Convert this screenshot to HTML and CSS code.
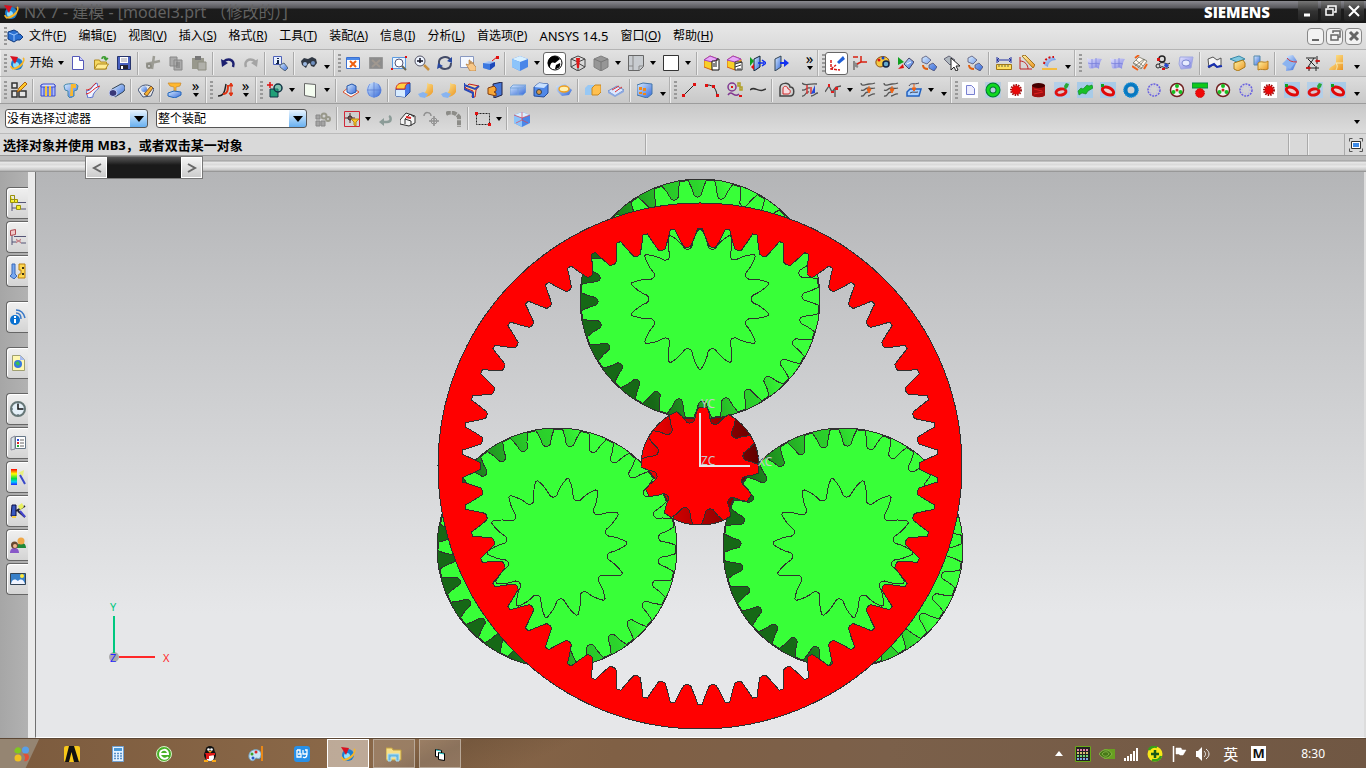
FILE: index.html
```html
<!DOCTYPE html>
<html lang="zh-CN">
<head>
<meta charset="utf-8">
<title>NX 7 - 建模</title>
<link rel="stylesheet" href="styles.css">
</head>
<body>
<svg class="defs" aria-hidden="true">
<defs>
<linearGradient id="gb" x1="0" y1="0" x2="1" y2="1"><stop offset="0" stop-color="#d8ecff"/><stop offset="1" stop-color="#3468d8"/></linearGradient>
<linearGradient id="gy" x1="0" y1="0" x2="1" y2="1"><stop offset="0" stop-color="#fff6a8"/><stop offset="1" stop-color="#ec9420"/></linearGradient>
<linearGradient id="gv" x1="0" y1="0" x2="1" y2="1"><stop offset="0" stop-color="#e4e4ff"/><stop offset="1" stop-color="#7c80e0"/></linearGradient>
<linearGradient id="gr" x1="0" y1="0" x2="0" y2="1"><stop offset="0" stop-color="#f00"/><stop offset=".3" stop-color="#ff0"/><stop offset=".6" stop-color="#0d4"/><stop offset=".8" stop-color="#0cf"/><stop offset="1" stop-color="#22f"/></linearGradient>
</defs>
<symbol id="nx" viewBox="0 0 16 16"><circle cx="8" cy="9" r="6" fill="#1c7fd0"/><circle cx="7" cy="10" r="3" fill="#8fe0ff"/><path d="M14 3c3 2-2 9-11 11M2 11c0 4 7 4 12-3" fill="none" stroke="#f5b52a" stroke-width="1.600"/><path d="M1 1l8 1-3 7z" fill="#d81020"/></symbol>
<symbol id="part" viewBox="0 0 16 16"><path d="M1 4l6-2 4 2v2h2l3 3-3 3h-3l-3 2-6-3z" fill="#2a6fd0" stroke="#123c80"/><path d="M2 5l5 2v6M7 7l4-2" fill="none" stroke="#9cc8ff"/></symbol>
<symbol id="new" viewBox="0 0 16 16"><path d="M2.500 1.500h7l4 4v9h-11z" fill="#fff" stroke="#5458b8"/><path d="M9.500 1.500v4h4" fill="#c8ccff" stroke="#5458b8"/></symbol>
<symbol id="open" viewBox="0 0 16 16"><path d="M1.500 14V5h5l1 2h6v7z" fill="#f6d860" stroke="#b08a20"/><path d="M1.500 14l3-5h11l-3 5z" fill="#ffeb90" stroke="#b08a20"/><path d="M9 4c0-3 4-3 4 0M11 3l2 2 2-2" fill="none" stroke="#3c9c30" stroke-width="1.500"/></symbol>
<symbol id="save" viewBox="0 0 16 16"><path d="M1.500 1.500h13v13h-13z" fill="#4860c0" stroke="#26346c"/><path d="M4 2h8v6H4z" fill="#fff"/><path d="M5 4h6M5 6h6" stroke="#99a"/><path d="M4 10h8v4H4z" fill="#223"/><path d="M5 11h2v3H5z" fill="#fff"/></symbol>
<symbol id="cut" viewBox="0 0 16 16"><path d="M1 9l14-3M9 1L7 14" stroke="#9c9c94" stroke-width="2.500"/><circle cx="4" cy="11" r="2" fill="none" stroke="#8c8c84" stroke-width="2"/></symbol>
<symbol id="copy" viewBox="0 0 16 16"><path d="M2 2h7v9H2zM6 5h8v10H6z" fill="#aaa" stroke="#888"/><path d="M8 8h4M8 10h4M8 12h4" stroke="#777"/></symbol>
<symbol id="paste" viewBox="0 0 16 16"><path d="M1 3h12v11H1z" fill="#98988c"/><path d="M4 1h6v4H4z" fill="#777"/><path d="M7 7h8v8H7z" fill="#b0b0aa" stroke="#8c8c80"/></symbol>
<symbol id="undo" viewBox="0 0 16 16"><path d="M3 8c3-6 13-4 10 4" fill="none" stroke="#1c2070" stroke-width="2.500"/><path d="M1 4l1 8 6-4z" fill="#1c2070"/></symbol>
<symbol id="redo" viewBox="0 0 16 16"><path d="M13 8C10 2 0 4 3 12" fill="none" stroke="#a4a4a4" stroke-width="2.500"/><path d="M15 4l-1 8-6-4z" fill="#a4a4a4"/></symbol>
<symbol id="info" viewBox="0 0 16 16"><path d="M1.500 1.500h8v8h-8z" fill="#e8f0ff" stroke="#4c60b8"/><path d="M5 3h2v1H5zM5 5h2v4H4V8h1z" fill="#124"/><path d="M8 10l4-2 4 5-3 3-5-4z" fill="url(#gb)" stroke="#567"/></symbol>
<symbol id="find" viewBox="0 0 16 16"><path d="M0 6l3-3 4 1 4-2 4 2 1 4-3 4-3-1-1-3-2 1-2 4-4-3z" fill="#303844"/><circle cx="4" cy="9" r="2" fill="#9cb8e0"/><circle cx="12" cy="8" r="2" fill="#7090c0"/></symbol>
<symbol id="fit" viewBox="0 0 16 16"><path d="M1.500 2.500h13v11h-13z" fill="#fff" stroke="#3c70d0"/><path d="M2 3h12v2H2z" fill="#4c8ae8"/><path d="M5 6l6 6M11 6l-6 6" stroke="#f06010" stroke-width="2"/></symbol>
<symbol id="fitg" viewBox="0 0 16 16"><path d="M1.500 2.500h13v11h-13z" fill="#8c8c8c" stroke="#999"/><path d="M4 5l8 7M12 5l-8 7" stroke="#a09890" stroke-width="2"/></symbol>
<symbol id="zoomfit" viewBox="0 0 16 16"><path d="M1.500 2.500h13v11h-13z" fill="#e8f4ff" stroke="#5c9ae0"/><circle cx="8" cy="8" r="4" fill="#fff" stroke="#557"/><path d="M11 11l4 4" stroke="#665" stroke-width="2"/><path d="M0 13h2v2H0zM14 1h2v2h-2z" fill="#e01010"/></symbol>
<symbol id="zoom" viewBox="0 0 16 16"><circle cx="6" cy="6" r="5" fill="#eef4ff" stroke="#556"/><path d="M3 6h6M6 3v5" stroke="#112" stroke-width="1.500"/><path d="M10 10l5 5" stroke="#c89040" stroke-width="2.500"/></symbol>
<symbol id="rot" viewBox="0 0 16 16"><path d="M2 9C1 1 11 0 14 6M14 8c0 7-9 8-12 2" fill="none" stroke="#444c68" stroke-width="2"/><path d="M15 2v6l-5-2zM0 14l1-6 5 3z" fill="#2848a0"/></symbol>
<symbol id="pan" viewBox="0 0 16 16"><path d="M.500 1.500h13v11H.500z" fill="#f4f8ff" stroke="#8898c0"/><path d="M6 9l3 1V5h1v4l1-3 1 3 1-2 1 3 2 2v4h-6z" fill="#f8c888" stroke="#a86c28" stroke-width=".6"/></symbol>
<symbol id="persp" viewBox="0 0 16 16"><path d="M0 8l5-2 7 1v4l-5 4-7-2z" fill="url(#gb)"/><path d="M0 8l7 1v6l-7-2z" fill="#3c78e0"/><path d="M12 7l-5 2v6l5-4z" fill="#1c48b8"/><path d="M9 6l5-4" stroke="#d11"/><path d="M13 1h3v3h-3z" fill="#e01010"/></symbol>
<symbol id="cube" viewBox="0 0 16 16"><path d="M0 4l8-3 8 3v8l-8 4-8-4z" fill="#4a86e8"/><path d="M0 4l8-3 8 3-8 3z" fill="#d8f0ff"/><path d="M0 4l8 3v9l-8-4z" fill="#8cc4fa"/></symbol>
<symbol id="ball" viewBox="0 0 16 16"><circle cx="8" cy="8" r="7" fill="#fff" stroke="#000"/><path d="M8 1a7 7 0 0 0-5 12c0-6 3-6 5-5l5-4a7 7 0 0 0-5-3zM9 10l4-2c1 4-2 6-5 6z"/></symbol>
<symbol id="wire" viewBox="0 0 16 16"><path d="M1 4l7-3 7 3v8l-7 4-7-4zM1 4l7 3 7-3M8 7v9M1 12l7-4 7 4" fill="none" stroke="#444"/><path d="M6 3h4l-1 10H7z" fill="#e01818"/></symbol>
<symbol id="wireg" viewBox="0 0 16 16"><path d="M1 4l7-3 7 3v8l-7 4-7-4z" fill="#969696" stroke="#808080"/><path d="M1 4l7 3 7-3M8 7v9" fill="none" stroke="#777"/></symbol>
<symbol id="note" viewBox="0 0 16 16"><path d="M.500.500h15v11l-4 4H.500z" fill="#c8ccd0" stroke="#666"/><path d="M1 11h4v4M5 1v10M11 15v-4h4" fill="none" stroke="#888"/></symbol>
<symbol id="white" viewBox="0 0 16 16"><path d="M.500.500h15v15H.500z" fill="#fff" stroke="#333"/></symbol>
<symbol id="boxp" viewBox="0 0 16 16"><path d="M0 5l6-4 8 3v8l-6 3-8-3z" fill="#f8d028" stroke="#d86010"/><path d="M0 5l6-4 8 3-6 3z" fill="#e8a8f8" stroke="#a040c0"/><path d="M8 6h5v-2h2v11H8z" fill="#fff" stroke="#111"/><path d="M10 8v4M12 7v5" stroke="#111"/></symbol>
<symbol id="boxq" viewBox="0 0 16 16"><path d="M0 5l6-4 8 3v8l-6 3-8-3z" fill="#f8d028" stroke="#d86010"/><path d="M0 5l6-4 8 3-6 3z" fill="#e8a8f8" stroke="#a040c0"/><path d="M8 7h7v8H8z" fill="#fff" stroke="#333"/><path d="M8 9l7-2M8 12l6-2M10 14h4" stroke="#333"/></symbol>
<symbol id="secr" viewBox="0 0 16 16"><path d="M4 4l6-3v11l-6 4z" fill="url(#gb)" stroke="#123"/><path d="M0 2l4 4-4 5z" fill="#10a020"/><path d="M1 12l3-3v6z" fill="#e01010"/><path d="M8 8h6M12 5l4 3-4 3" stroke="#1030f0" fill="none" stroke-width="1.500"/></symbol>
<symbol id="sec" viewBox="0 0 16 16"><path d="M2 4l6-3v11l-6 4z" fill="url(#gb)" stroke="#345"/><path d="M7 8h6" stroke="#1030f0" stroke-width="2"/><path d="M11 4l5 4-5 4z" fill="#1030f0"/></symbol>
<symbol id="wcs" viewBox="0 0 16 16"><path d="M2 5v9l9 1M2 14l5-4" fill="none" stroke="#d81818" stroke-dasharray="3 1" stroke-width="1.500"/><path d="M8 7l6-6 2 3-6 5z" fill="#2060d8"/></symbol>
<symbol id="axes" viewBox="0 0 16 16"><path d="M2 6v9M2 10l4 2M6 10l-3-2" stroke="#888" fill="none" stroke-width="2"/><path d="M9 1v6h6M9 7L5 9M1 2h5" fill="none" stroke="#d82010" stroke-width="1.500"/></symbol>
<symbol id="paint" viewBox="0 0 16 16"><path d="M1 6c2-6 12-6 13 0s-4 3-6 5-8 1-7-5z" fill="#f4c840" stroke="#885010"/><circle cx="4" cy="5" r="1.500" fill="#d11"/><circle cx="8" cy="3" r="1.500" fill="#14c"/><circle cx="11" cy="9" r="3" fill="#6ac" stroke="#124" stroke-width="1.500"/></symbol>
<symbol id="tri" viewBox="0 0 16 16"><path d="M0 2l6 5-6 3z" fill="#10a020"/><path d="M0 14l5-5 1 4z" fill="#e01010"/><path d="M6 9l5-6 5 4-5 7z" fill="url(#gb)" stroke="#446"/><path d="M9 9l4-2" stroke="#fff"/></symbol>
<symbol id="move" viewBox="0 0 16 16"><path d="M1 3l4-2 5 4-4 4-5-2zM8 10l4-2 4 4-3 4-5-3z" fill="url(#gb)" stroke="#446" stroke-width=".7"/><path d="M2 10c0 4 3 4 5 4" fill="none" stroke="#e06010" stroke-width="2"/></symbol>
<symbol id="pick" viewBox="0 0 16 16"><path d="M0 4l5-3 6 4-5 5z" fill="#b0b8c0" stroke="#667"/><path d="M7 3v12l3-3 2 4 2-1-2-4h4z" fill="#fff" stroke="#222"/></symbol>
<symbol id="meas" viewBox="0 0 16 16"><path d="M1 2v6M15 2v6M1 5h14M3 3L1 5l2 2M13 3l2 2-2 2" stroke="#2030a0" fill="none"/><path d="M.500 9.500h15v5H.500z" fill="#ffe060" stroke="#a07818"/><path d="M3 10v2M6 10v2M9 10v2M12 10v2" stroke="#664"/></symbol>
<symbol id="ang" viewBox="0 0 16 16"><path d="M1 2v12h12M1 6c5 0 8 4 8 8" fill="none" stroke="#c02020"/><path d="M3 1l3-1 10 10-2 3z" fill="url(#gy)" stroke="#a07020"/></symbol>
<symbol id="curv" viewBox="0 0 16 16"><path d="M2 10c1-5 4-8 10-8l2 3c-5 0-8 3-8 7z" fill="url(#gb)"/><path d="M2 9c1-5 4-7 10-7" stroke="#d01010" fill="none" stroke-width="2" stroke-dasharray="2 2"/><path d="M0 13h15v2H0z" fill="#f4bc40"/></symbol>
<symbol id="surf" viewBox="0 0 16 16"><path d="M1 3c5 3 9-1 15 1-2 3-3 6-3 10-4-3-6 1-10-1-1-4-1-7-2-10z" fill="url(#gv)"/><path d="M2 8c4 2 8-1 12 1M6 4v9M10 3v9" stroke="#7078d8" fill="none" stroke-width=".7"/></symbol>
<symbol id="mesh" viewBox="0 0 16 16"><path d="M1 8l6-6 8 4-6 8zM4 5l7 6M3 11l9-7M6 13l7-9M2 8l8 5" fill="#fff8f0" stroke="#665" stroke-width=".7"/><path d="M3 3l4-3M0 11l6 4M12 14l3-5" stroke="#f06018" stroke-width="2"/></symbol>
<symbol id="sweep" viewBox="0 0 16 16"><circle cx="7" cy="4" r="3" fill="none" stroke="#222" stroke-width="1.500"/><circle cx="3" cy="11" r="2" fill="none" stroke="#222"/><path d="M4 9c4-4 8 2 11-1M5 13c3-4 5 3 9-1" fill="none" stroke="#222"/><path d="M10 8l4 2-2 3-3-2z" fill="#2448d0"/><path d="M2 3h3v3H2zM7 13h3v2H7z" fill="#d11"/></symbol>
<symbol id="surfo" viewBox="0 0 16 16"><path d="M2 2h13l-2 11-10 1-2-5z" fill="url(#gv)" stroke="#a0a8e0"/><ellipse cx="8" cy="8" rx="4" ry="3" fill="#e8ecff" stroke="#5868c0" stroke-width=".7"/></symbol>
<symbol id="xform" viewBox="0 0 16 16"><path d="M1 4l5-2 4 3 4-2v7l-4 2-4-2-4 3z" fill="#f4f4f4" stroke="#555"/><path d="M1 12l6-3 3 3 5-1" stroke="#1830b0" fill="none" stroke-width="2"/></symbol>
<symbol id="lay" viewBox="0 0 16 16"><path d="M0 4l9-3 6 3-8 3z" fill="#80c8e0" stroke="#3888a8"/><path d="M4 8l9-3 2 3v4l-7 4-4-2z" fill="url(#gy)" stroke="#a87818"/></symbol>
<symbol id="trim" viewBox="0 0 16 16"><path d="M1 1h6v9H1z" fill="url(#gb)" stroke="#58a"/><path d="M5 8c4-3 6 1 10-2v8c-4 2-7-1-10 1z" fill="url(#gy)" stroke="#b88020"/></symbol>
<symbol id="bsur" viewBox="0 0 16 16"><path d="M5 1l6-1 4 6-4 9-7 1z" fill="url(#gb)"/><path d="M0 9l6-6 8 4-6 7z" fill="#8cb4f0"/><path d="M5 3c2 3 5 4 10 4" stroke="#d63838" fill="none"/></symbol>
<symbol id="xdim" viewBox="0 0 16 16"><path d="M3 4l7 7M9 3l-6 9M1 3h10M12 1v8M1 13h13M4 11v5M11 11v5" stroke="#222"/><path d="M11 5l4 1-4 1zM5 12l-4 1 4 1z" stroke="#c11" fill="#c11"/></symbol>
<symbol id="boot" viewBox="0 0 16 16"><path d="M8 0h7v15H1c0-4 7-4 7-8z" fill="url(#gy)"/><path d="M8 8c2 3 1 5 0 7M8 8h7" fill="none" stroke="#f8f0c0"/></symbol>
<symbol id="sketch" viewBox="0 0 16 16"><path d="M1 1h5v5H1zM1 9h5v6H1zM8 9h7v6H8z" fill="#e4e4e4" stroke="#333" stroke-width="1.500"/><path d="M6 10l2-4 6-6 2 2-6 6z" fill="#ffc828" stroke="#a86010"/></symbol>
<symbol id="extr" viewBox="0 0 16 16"><path d="M1 3h14v11H1z" fill="#a8b8ff" stroke="#3c4cc8"/><path d="M1 3l2-1h11l1 1v2H1zM4 5v9M8 5v9M12 5v9" fill="#d0d8ff" stroke="#3c4cc8"/><path d="M6 4v10M10 4v10" stroke="#f4c840" stroke-width="2"/></symbol>
<symbol id="revol" viewBox="0 0 16 16"><path d="M1 4c0-3 14-3 14 0l-1 4-3 1v5l-4 2-2-2V9L2 8z" fill="url(#gb)" stroke="#48a"/><path d="M8 2h5v4h-3v8H7z" fill="#f8b830"/></symbol>
<symbol id="skin" viewBox="0 0 16 16"><path d="M0 9c6 0 6-6 11-8l1 4c4 0-6 5-5 10l-5 1z" fill="#f0f4ff" stroke="#5870d0"/><path d="M0 12c6-1 7-6 14-8M0 8c5 0 6-4 10-7" stroke="#e02020" fill="none"/></symbol>
<symbol id="tube" viewBox="0 0 16 16"><path d="M3 7l9-5c5 0 5 6 2 8l-8 5z" fill="url(#gb)" stroke="#345"/><ellipse cx="4" cy="11" rx="4" ry="3.500" fill="#383878" stroke="#c8d4f8"/></symbol>
<symbol id="edit" viewBox="0 0 16 16"><path d="M0 8c3-6 11-7 16-1l-3 7-8 1z" fill="#e8e8e8" stroke="#457"/><circle cx="6" cy="7" r="3" fill="url(#gb)"/><path d="M6 12l7-8 2 2-6 8z" fill="#f8b030" stroke="#753"/></symbol>
<symbol id="datum" viewBox="0 0 16 16"><path d="M1 1h13l-1 3-4 1v5H7V5L3 4z" fill="#ffb830" stroke="#c8882c" stroke-width=".7"/><path d="M1 11l6-2 7 1v3l-6 3-7-2z" fill="url(#gb)" stroke="#26b"/></symbol>
<symbol id="spine" viewBox="0 0 16 16"><path d="M1 14c7 0 7-7 8-12" stroke="#222" stroke-width="1.500" fill="none"/><path d="M6 12c5 0 5-5 5-9" stroke="#e03010" stroke-width="2" fill="none"/><path d="M12 4l2-3 2 3zM12 11l2 3 2-3zM14 3v9" fill="#e03010" stroke="#e03010"/></symbol>
<symbol id="addc" viewBox="0 0 16 16"><path d="M0 3h6M3 0v6" stroke="#e01010" stroke-width="1.500"/><path d="M3 7h8v8H3z" fill="#20a078" stroke="#134"/><circle cx="11" cy="6" r="4" fill="#28b088" fill-opacity=".5" stroke="#134" stroke-width="1.500"/></symbol>
<symbol id="plane" viewBox="0 0 16 16"><path d="M2.500 1.500l11 1v13l-11-2z" fill="#f4fcf0" stroke="#666"/></symbol>
<symbol id="pad" viewBox="0 0 16 16"><path d="M0 10l7-6 9 6-8 5z" fill="#f8f8f8" stroke="#d85030"/><path d="M4 4l5-2 4 2v6l-5 2-4-2z" fill="url(#gb)" stroke="#25a"/></symbol>
<symbol id="sph" viewBox="0 0 16 16"><circle cx="8" cy="8" r="7.500" fill="url(#gb)"/><path d="M8 0v16M1 8h14M4 2c-3 4-3 8 0 12M12 2c3 4 3 8 0 12" fill="none" stroke="#5878d0" stroke-width=".7"/></symbol>
<symbol id="blend" viewBox="0 0 16 16"><path d="M1 7l5-5 9-1v9l-5 5-9-1z" fill="#4878e8" stroke="#214a9c"/><path d="M1 7c0-4 3-6 6-6h8c-3 0-5 2-5 6z" fill="#ffd040" stroke="#d02020"/><path d="M1 8h9v7l-9-1z" fill="#d8ecff"/></symbol>
<symbol id="fold" viewBox="0 0 16 16"><path d="M9 0c1 3 4 1 6 3v7c-3 5-8 6-13 4 5-2 8-6 7-14z" fill="url(#gy)"/><path d="M0 12l5-2 5 2-3 4-5-1z" fill="#88b4f0"/></symbol>
<symbol id="draft" viewBox="0 0 16 16"><path d="M1 6l4-4 10 2-3 4-1 7H8l1-6z" fill="#f8d8a0" stroke="#c02020"/><path d="M0 1v6l9 4v5M0 3l11 4 4-3" stroke="#2848b8" fill="none" stroke-width="2"/></symbol>
<symbol id="bool" viewBox="0 0 16 16"><path d="M6 2l9-2v13l-8 3z" fill="#4878d8" stroke="#224"/><path d="M1 6l6-2 2 2v3l-2 1 2 1v3l-8-2z" fill="#f8a838" stroke="#813c10"/></symbol>
<symbol id="brick" viewBox="0 0 16 16"><path d="M0 6l3-3h13v7l-3 3H0z" fill="url(#gb)" stroke="#78a4d8"/><path d="M0 6h13l3-3M8 6v7" fill="none" stroke="#78a4d8"/></symbol>
<symbol id="hole" viewBox="0 0 16 16"><path d="M1 5l5-4 9 1v9l-4 4-10-1z" fill="#5088e8" stroke="#244c9c"/><path d="M1 5l5-4 9 1-4 4z" fill="#c8e0ff"/><circle cx="6" cy="10" r="2.500" fill="#d89848" stroke="#345"/></symbol>
<symbol id="ring" viewBox="0 0 16 16"><path d="M0 4l9-2 7 6-3 5-7 1-5-5z" fill="url(#gb)"/><ellipse cx="8" cy="7" rx="5" ry="3" fill="#fff0b0" stroke="#f0a020" stroke-width="1.500"/></symbol>
<symbol id="face" viewBox="0 0 16 16"><path d="M0 6l3-3h13v7l-3 3H0z" fill="#98c8f4"/><path d="M7 6l3-3h6v7l-3 3H7z" fill="#ffc050" stroke="#c88820"/></symbol>
<symbol id="off" viewBox="0 0 16 16"><path d="M0 9l9-5 7 4-9 6z" fill="#dce8ff" stroke="#6c8cc8"/><path d="M0 9l7 4v2l-7-4zM7 13l9-5v2l-9 5z" fill="#8ca8e0"/><path d="M4 8l7-4M7 10l7-5" stroke="#e03030"/></symbol>
<symbol id="patt" viewBox="0 0 16 16"><path d="M0 3l6-2 9 1v10l-5 4-10-3z" fill="url(#gb)" stroke="#47a"/><path d="M2 5h3v3H2zM6 6h3v3H6zM2 10h3v2H2zM6 11h3v2H6z" fill="#f08818"/></symbol>
<symbol id="line" viewBox="0 0 16 16"><path d="M3 13L13 3" stroke="#222"/><path d="M1 12h3v3H1zM12 1h3v3h-3z" fill="#e01010"/></symbol>
<symbol id="arc" viewBox="0 0 16 16"><path d="M3 3c7 0 9 4 10 10" stroke="#222" fill="none"/><path d="M1 2h3v3H1zM8 3h3v3H8zM12 12h3v3h-3z" fill="#e01010"/></symbol>
<symbol id="circ" viewBox="0 0 16 16"><circle cx="5" cy="5" r="4" fill="none" stroke="#803890" stroke-width="1.500"/><path d="M4 4h2v2H4zM12 13h3v2h-3z" fill="#d11"/><path d="M1 13c4-6 6 4 11-1" stroke="#803890" fill="none" stroke-width="1.500"/><path d="M11 1h2v3h-2zM13 5h2v3h-2z" fill="none" stroke="#b0a028" stroke-width="1.500"/></symbol>
<symbol id="spl" viewBox="0 0 16 16"><path d="M0 8c5-5 8 4 16-1" stroke="#333" fill="none" stroke-width="1.500"/></symbol>
<symbol id="offc" viewBox="0 0 16 16"><path d="M1 14V6c0-6 10-6 10-1 5 0 5 9 0 9z" fill="none" stroke="#444" stroke-width="1.500"/><path d="M4 12V7c0-4 5-3 5 0 3 0 3 5 0 5z" fill="#f8dce0" stroke="#d02828"/></symbol>
<symbol id="brg" viewBox="0 0 16 16"><path d="M0 1c3 4 6 0 15 1M0 8c4 1 4-3 8-2M0 14c4 1 3-5 7-4M9 14c4 0 4-3 7-3" stroke="#555" fill="none" stroke-width="1.300"/><path d="M5 3v9M9 5v7" stroke="#d83838" fill="none" stroke-width="1.500"/><path d="M9 12l4-9v8z" fill="#2448d8"/></symbol>
<symbol id="pts" viewBox="0 0 16 16"><path d="M0 10l4-6 3 6 4-5 5-1M10 8v7" stroke="#555" fill="none" stroke-width="1.300"/><path d="M3 2h2v3H3zM6 9h3v2H6zM10 5h3v3h-3z" fill="#e02020"/></symbol>
<symbol id="proj" viewBox="0 0 16 16"><path d="M1 1c0 4 5 1 8 1s4 0 6-1M1 8c4 2 3-2 7-2s4 1 7 0M1 14c5 1 2-4 7-4M8 14c3 0 4-3 7-2" stroke="#555" fill="none" stroke-width="1.300"/><path d="M9 4v4M7 7h4l-2 4z" fill="#f06010" stroke="#f06010"/></symbol>
<symbol id="projs" viewBox="0 0 16 16"><path d="M1 10l3-3h11l-2 7H1z" fill="#a8d0ff" stroke="#2060c0" stroke-width="1.500"/><path d="M3 4c2-4 5-1 10-3M4 11c3-2 5 0 8-1" stroke="#445" fill="none"/><path d="M8 2v4M6 6h4L8 9z" fill="#f06010" stroke="#f06010"/></symbol>
<symbol id="g-new" viewBox="0 0 16 16"><path d="M0 0h16v16H0z" fill="#fff"/><path d="M4.500 3.500h5l3 3v6h-8z" fill="#eef" stroke="#7880d0"/></symbol>
<symbol id="g-ring" viewBox="0 0 16 16"><path d="M0 0h16v16H0z" fill="#b8cce0"/><circle cx="8" cy="8" r="5" fill="none" stroke="#073" stroke-width="5"/><circle cx="8" cy="8" r="5" fill="none" stroke="#10d820" stroke-width="3"/></symbol>
<symbol id="g-star" viewBox="0 0 16 16"><path d="M0 0h16v16H0z" fill="#fff"/><circle cx="8" cy="8" r="4.500" fill="#e80808"/><circle cx="8" cy="8" r="5" fill="none" stroke="#a01010" stroke-width="2" stroke-dasharray="1.500 1"/></symbol>
<symbol id="g-drum" viewBox="0 0 16 16"><path d="M1 3v10c0 3 13 3 13 0V3z" fill="#a01010"/><ellipse cx="7.500" cy="3.500" rx="6.500" ry="2.500" fill="#400"/><path d="M3 7l8 2M3 12l9-2" stroke="#e02020"/></symbol>
<symbol id="g-worm" viewBox="0 0 16 16"><path d="M0 0h16v16H0z" fill="#b4cfe8"/><ellipse cx="7" cy="10" rx="5" ry="3" transform="rotate(-12 7 10)" fill="#d8c8d0" stroke="#e01010" stroke-width="3"/><path d="M10 4l2-3 3 1-1 3-3 3z" fill="#28a838"/></symbol>
<symbol id="g-shaft" viewBox="0 0 16 16"><path d="M0 0h16v16H0z" fill="#a8cbe8"/><path d="M1 9l3-3 2 1 4-4 2 1 3-1 1 3-5 3-2 3-4-1-3 2z" fill="#18c028" stroke="#108020" stroke-width=".6"/></symbol>
<symbol id="g-tor" viewBox="0 0 16 16"><path d="M0 0h16v16H0z" fill="#a8cbe8"/><ellipse cx="8" cy="9" rx="6" ry="3.500" transform="rotate(25 8 9)" fill="#e8d0d0" stroke="#e00808" stroke-width="3"/><path d="M1 2h3v3H1z" fill="#10a020"/></symbol>
<symbol id="g-blue" viewBox="0 0 16 16"><circle cx="8" cy="8" r="5.500" fill="none" stroke="#0878c0" stroke-width="4"/><circle cx="8" cy="8" r="7" fill="none" stroke="#1890d8" stroke-width="1.500" stroke-dasharray="1 1"/></symbol>
<symbol id="g-out" viewBox="0 0 16 16"><circle cx="8" cy="8" r="6" fill="none" stroke="#6860e0" stroke-width="1.500" stroke-dasharray="2 1"/><circle cx="8" cy="8" r="4" fill="none" stroke="#b0a8f8" stroke-dasharray="1 2"/></symbol>
<symbol id="g-pl" viewBox="0 0 16 16"><circle cx="8" cy="8" r="6.500" fill="#f4f4f0" stroke="#702020" stroke-width="1.500"/><g fill="#18c020"><circle cx="8" cy="4" r="2"/><circle cx="4.500" cy="10" r="2"/><circle cx="11.500" cy="10" r="2"/></g><circle cx="8" cy="8" r="1.500" fill="#c22"/></symbol>
<symbol id="g-rack" viewBox="0 0 16 16"><path d="M0 1h16v5H0z" fill="#10c818" stroke="#084"/><circle cx="8" cy="11" r="4.500" fill="#f00808" stroke="#c01010" stroke-dasharray="1.500 1"/></symbol>
<symbol id="snapg" viewBox="0 0 16 16"><path d="M1 4h4v4H1zM1 10h4v5H1zM6 10h4v5H6z" fill="#a4a4a4" stroke="#888"/><circle cx="9" cy="5" r="2.500" fill="none" stroke="#98988a" stroke-width="2"/><circle cx="13" cy="8" r="2" fill="none" stroke="#98988a" stroke-width="2"/></symbol>
<symbol id="snapf" viewBox="0 0 16 16"><path d="M.500.500h15v15H.500z" fill="none" stroke="#d02838"/><path d="M6 2v10M1 7h10" stroke="#622"/><circle cx="6" cy="7" r="2" fill="none" stroke="#222"/><path d="M7 8h8l-3 3v4l-2-1v-3z" fill="#f8c828" stroke="#b88818"/></symbol>
<symbol id="back" viewBox="0 0 16 16"><path d="M5 11h5c5 0 4-5 2-6" fill="none" stroke="#8c9c98" stroke-width="2.500"/><path d="M2 11l5-4v8z" fill="#8c9c98"/></symbol>
<symbol id="snap" viewBox="0 0 16 16"><path d="M0 9l6-7 9 3v7l-6 3-9-2z" fill="#f4f4f4" stroke="#333"/><path d="M5 13V8l5-5 4 3M5 8l6 2v5" fill="none" stroke="#333"/><path d="M6 6l5 1" stroke="#d22" stroke-width="2"/></symbol>
<symbol id="turn" viewBox="0 0 16 16"><path d="M1 5c0-5 7-4 7 0M11 5v10M6 10h10" stroke="#909090" stroke-width="1.500" fill="none"/><circle cx="11" cy="10" r="3" fill="none" stroke="#909090"/></symbol>
<symbol id="pipe" viewBox="0 0 16 16"><path d="M0 3c5-3 10-1 13 3v10" stroke="#8c8c88" stroke-width="4" fill="none" stroke-dasharray="5 1"/></symbol>
<symbol id="rect" viewBox="0 0 16 16"><path d="M1.500 2.500h13v11h-13z" fill="none" stroke="#222" stroke-dasharray="2 1"/><path d="M0 1h3v3H0zM13 12h3v3h-3z" fill="#e01010"/></symbol>
<symbol id="cubr" viewBox="0 0 16 16"><use href="#cube"/><path d="M8 1v8l6 3M8 9l-6 3M0 4l8 3 8-3" stroke="#e04050" fill="none" stroke-width=".7"/></symbol>
<symbol id="full" viewBox="0 0 16 16"><path d="M1.500 4.500v-3h3M11.500 1.500h3v3M14.500 11.500v3h-3M4.500 14.500h-3v-3" fill="none" stroke="#555"/><path d="M3.500 4.500h9v7h-9z" fill="#fff" stroke="#333"/><path d="M5 6h6v4H5z" fill="#3c8ae8"/></symbol>
<symbol id="r-asm" viewBox="0 0 16 16"><path d="M2 6v10M2 13h4M7 7.500h9M11 14h5" stroke="#557"/><path d="M.500.500h4v7h3v-3h-3v-4M.500.500v7h4M.500 4.500h4M6.500 10.500h4v4h-4z" fill="#f8f028" stroke="#98900c"/></symbol>
<symbol id="r-con" viewBox="0 0 16 16"><path d="M2 6v10M2 13h4M4 7.500h12M11 14h5" stroke="#557"/><path d="M.500 1.500l5-1v5l-5 1z" fill="#f0c8c8" stroke="#b04850"/><path d="M6 10l5 4M11 10l-5 4M6 12h5" stroke="#c07880"/></symbol>
<symbol id="r-tool" viewBox="0 0 16 16"><path d="M2 1h3v10l2 2-3 3-4-3 2-2z" fill="#78a8f0" stroke="#3868b8"/><path d="M9 1h6v14H8l1-4h2V7H9z" fill="#ffd850" stroke="#b88010"/><circle cx="13" cy="5" r="1"/><circle cx="13" cy="11" r="1"/></symbol>
<symbol id="r-info" viewBox="0 0 16 16"><circle cx="5" cy="11" r="5" fill="#0870d0"/><path d="M4 7h2v2H4zM4 10h2v4H4z" fill="#fff"/><path d="M6 4c4 0 5 3 5 6M6 1c6 0 8 4 9 8" stroke="#3878c8" fill="none" stroke-width="1.500"/></symbol>
<symbol id="r-web" viewBox="0 0 16 16"><path d="M2.500.500h8l4 4v11h-12z" fill="#fff8b0" stroke="#a0a070"/><path d="M10 0l5 5h-5z" fill="#a8bcf0"/><circle cx="8" cy="9" r="4" fill="#3878e0"/><path d="M5 8l3-2 2 3-2 2z" fill="#38c050"/></symbol>
<symbol id="r-clk" viewBox="0 0 16 16"><circle cx="8" cy="8" r="7" fill="#e4f0f8" stroke="#677" stroke-width="2"/><path d="M8 3v5h5" fill="none" stroke="#111" stroke-width="1.500"/><path d="M8 2v1M8 13v1M2 8h1M13 8h1" stroke="#345"/></symbol>
<symbol id="r-pal" viewBox="0 0 16 16"><path d="M1 3l4-2v13l-4 1z" fill="#d8e4e8" stroke="#889"/><path d="M5.500 1.500h10v12h-10z" fill="#fff" stroke="#678"/><path d="M7 4h2v2H7z" fill="#24d"/><path d="M7 7h2v2H7z" fill="#d22"/><path d="M7 10h2v2H7z" fill="#2a3"/><path d="M10 5h4M10 8h4M10 11h4" stroke="#666"/></symbol>
<symbol id="r-rain" viewBox="0 0 16 16"><path d="M1 0h6v16H1z" fill="url(#gr)"/><path d="M8 4l6-3-1 6z" fill="#e8f080"/><path d="M10 6l5 9" stroke="#3848c8" stroke-width="2"/></symbol>
<symbol id="r-wand" viewBox="0 0 16 16"><path d="M2 2h4v11H1z" fill="#3858c0" stroke="#114"/><path d="M6 8l9-5M8 8l7 6" stroke="#223" stroke-width="2"/><path d="M8 3l4-3 2 4-4 3z" fill="#e8f060"/><path d="M10 8l5 6" stroke="#44c" stroke-width="2"/><path d="M2 13h4v2H2z" fill="#f8d048"/></symbol>
<symbol id="r-usr" viewBox="0 0 16 16"><path d="M7 11c0-7 9-7 9 0z" fill="#208838"/><circle cx="11" cy="4" r="3.500" fill="#f0a848"/><path d="M0 16c0-7 9-7 9 0z" fill="#8858c8"/><circle cx="4.500" cy="8" r="3.500" fill="#684830"/><circle cx="5" cy="9" r="2" fill="#f0b890"/></symbol>
<symbol id="r-pic" viewBox="0 0 16 16"><path d="M.500 2.500h15v11H.500z" fill="#3880c8" stroke="#345"/><circle cx="12" cy="5" r="2" fill="#ffe838"/><path d="M1 13c1-6 5-5 7-3 3-3 6-1 7 3z" fill="#f0f4ff"/></symbol>
<symbol id="t-start" viewBox="0 0 16 16"><path d="M1 3c2-3 6-2 6 1 0 4-3 4-5 3s-2-2-1-4z" fill="#80c820"/><circle cx="11.500" cy="4" r="3.500" fill="#58a0e8"/><circle cx="4" cy="12" r="3.500" fill="#f0c020"/><path d="M9 8c4-1 6 0 6 3s-3 5-5 4c2-3 1-5-1-7z" fill="#e05038"/></symbol>
<symbol id="t-ans" viewBox="0 0 16 16"><rect width="16" height="16" rx="2" fill="#f8c818"/><path d="M1 16L5 0h5l5 16h-5L7.500 6 5 16z" fill="#111"/></symbol>
<symbol id="t-calc" viewBox="0 0 16 16"><path d="M2.500.500h11v15h-11z" fill="#e4f2ff" stroke="#70a0d0"/><path d="M4 2h8v3H4z" fill="#4898d8"/><path d="M4 7.500h8M4 10h8M4 12.500h8" stroke="#5890c8" stroke-width="1.500" stroke-dasharray="2 1"/></symbol>
<symbol id="t-e" viewBox="0 0 16 16"><circle cx="8" cy="8" r="7.500" fill="#48b028" stroke="#d8f0c8"/><path d="M12 11c-2 3-8 2-8-3s8-6 8 0H4" fill="none" stroke="#fff" stroke-width="2"/></symbol>
<symbol id="t-qq" viewBox="0 0 16 16"><ellipse cx="8" cy="9" rx="6" ry="6" fill="#111"/><circle cx="8" cy="4.500" r="4.500" fill="#111"/><ellipse cx="8" cy="11" rx="4" ry="4" fill="#fff"/><circle cx="6.500" cy="3.500" r="1.300" fill="#fff"/><circle cx="9.500" cy="3.500" r="1.300" fill="#fff"/><path d="M3 7h10v2l-6 1v3H4v-4z" fill="#e01818"/><path d="M2 14h4v2H2zM10 14h4v2h-4zM6 5h4l-2 2z" fill="#f8a818"/></symbol>
<symbol id="t-paint" viewBox="0 0 16 16"><path d="M1 9c1-7 13-7 12 0s-5 1-6 4-7 2-6-4z" fill="#c8e4f4" stroke="#78a8c8"/><circle cx="4" cy="8" r="1.500" fill="#38a028"/><circle cx="8" cy="6" r="1.500" fill="#d82828"/><circle cx="5" cy="12" r="1.500" fill="#2858c8"/><path d="M14 0v15" stroke="#e88818" stroke-width="2"/></symbol>
<symbol id="t-by" viewBox="0 0 16 16"><rect width="16" height="16" rx="3" fill="#2890e8"/><path d="M3 4v7h4V8H4M6 8V4H3M9 4v4h4V4h-2M13 8c0 4-3 4-4 3" fill="none" stroke="#fff" stroke-width="1.300"/></symbol>
<symbol id="t-dir" viewBox="0 0 16 16"><path d="M0 14V2h6l1 2h8v10z" fill="#f8e088" stroke="#c0a040"/><path d="M2 15V8h11v7h-3v-4H5v4z" fill="#68b8e0" stroke="#b0e0f4"/></symbol>
<symbol id="t-win" viewBox="0 0 16 16"><path d="M3.500 3.500l6 1v7l-6-1z" fill="#fff" stroke="#000"/><path d="M6.500 6.500l6 1v7l-6-1z" fill="#fff" stroke="#000"/><path d="M4 4l5 1M7 7l5 1" stroke="#28c8c8"/></symbol>
<symbol id="y-grid" viewBox="0 0 16 16"><path d="M.500.500h15v15H.500z" fill="#222" stroke="#68a818"/><g stroke-width="2" stroke-dasharray="2 1"><path d="M2 4h12" stroke="#e080a8"/><path d="M2 7h12" stroke="#d8c070"/><path d="M2 10h12" stroke="#70d878"/><path d="M2 13h12" stroke="#80a8e8"/></g></symbol>
<symbol id="y-nv" viewBox="0 0 16 16"><path d="M5 3h11v10H5z" fill="#68a020"/><path d="M0 8c4-6 10-5 13 0-4 6-9 5-13 0zM3 8c2-3 6-3 7 0-2 3-5 3-7 0z" fill="#487818" stroke="#98c858" stroke-width=".7"/></symbol>
<symbol id="y-sig" viewBox="0 0 16 16"><path d="M1 12h2v3H1zM4 10h2v5H4zM7 8h2v7H7zM10 5h2v10h-2zM13 2h2v13h-2z" fill="#fff"/></symbol>
<symbol id="y-plus" viewBox="0 0 16 16"><circle cx="8" cy="8" r="7.500" fill="#f8e818"/><path d="M2 4c1-3 5-4 8-3M14 10c-1 4-5 5-9 4" fill="none" stroke="#38a018" stroke-width="2.500"/><path d="M4 8h8M8 4v8" stroke="#185818" stroke-width="2.500"/></symbol>
<symbol id="y-flag" viewBox="0 0 16 16"><path d="M2 0h1v16H2zM5 2h5l1 2h4l-3 5H9L8 8H5z" fill="#fff" stroke="#fff" stroke-width=".5"/></symbol>
<symbol id="y-vol" viewBox="0 0 16 16"><path d="M1 5h2l4-4v14l-4-4H1z" fill="#fff"/><path d="M9 5c2 2 2 4 0 6M11 3c4 3 4 7 0 10" fill="none" stroke="#eee"/></symbol>
</svg>

<header class="title">
  <svg class="ic"><use href="#nx"/></svg>
  <h1>NX 7 - 建模 - [model3.prt （修改的）]</h1>
  <strong class="brand">SIEMENS</strong>
  <div class="winbtns">
    <button aria-label="最小化"><svg viewBox="0 0 16 16"><path d="M4 12h6" stroke="#fff" stroke-width="3"/></svg></button>
    <button aria-label="还原"><svg viewBox="0 0 16 16"><path d="M5 5V3h8v6h-2M3 6h7v6H3z" fill="none" stroke="#fff" stroke-width="1.500"/></svg></button>
    <button aria-label="关闭"><svg viewBox="0 0 16 16"><path d="M3 3l10 10M13 3L3 13" stroke="#fff" stroke-width="2"/></svg></button>
  </div>
</header>

<nav class="menu">
  <i class="grip"></i><svg class="ic"><use href="#part"/></svg>
  <button>文件(<u>F</u>)</button><button>编辑(<u>E</u>)</button><button>视图(<u>V</u>)</button><button>插入(<u>S</u>)</button><button>格式(<u>R</u>)</button><button>工具(<u>T</u>)</button><button>装配(<u>A</u>)</button><button>信息(<u>I</u>)</button><button>分析(<u>L</u>)</button><button>首选项(<u>P</u>)</button><button class="latin">ANSYS 14.5</button><button>窗口(<u>O</u>)</button><button>帮助(<u>H</u>)</button>
  <div class="docbtns">
    <button aria-label="最小化文档"><svg viewBox="0 0 16 16"><path d="M4 12h7" stroke="#666" stroke-width="2"/></svg></button>
    <button aria-label="还原文档"><svg viewBox="0 0 16 16"><path d="M6 5V3h7v6h-2M4 7h7v5H4zM4 7h7" fill="none" stroke="#666" stroke-width="1.500"/></svg></button>
    <button aria-label="关闭文档"><svg viewBox="0 0 16 16"><path d="M4 4l8 8M12 4l-8 8" stroke="#666" stroke-width="3"/></svg></button>
  </div>
</nav>

<div class="bar" role="toolbar" aria-label="标准">
  <section>
    <i class="grip"></i>
    <button class="go"><svg class="ic"><use href="#nx"/></svg>开始<i class="tri"></i></button>
    <button aria-label="新建"><svg><use href="#new"/></svg></button><button aria-label="打开"><svg><use href="#open"/></svg></button><button aria-label="保存"><svg><use href="#save"/></svg></button><i class="sep"></i>
    <button aria-label="剪切"><svg><use href="#cut"/></svg></button><button aria-label="复制"><svg><use href="#copy"/></svg></button><button aria-label="粘贴"><svg><use href="#paste"/></svg></button><i class="sep"></i>
    <button aria-label="撤消"><svg><use href="#undo"/></svg></button><button aria-label="重做"><svg><use href="#redo"/></svg></button><i class="sep"></i>
    <button aria-label="信息"><svg><use href="#info"/></svg></button><i class="sep"></i>
    <button aria-label="查找"><svg><use href="#find"/></svg></button><button class="more" aria-label="更多"></button>
  </section>
  <section>
    <i class="grip"></i>
    <button aria-label="适合窗口"><svg><use href="#fit"/></svg></button><button aria-label="适合所选"><svg><use href="#fitg"/></svg></button><button aria-label="缩放区域"><svg><use href="#zoomfit"/></svg></button><button aria-label="缩放"><svg><use href="#zoom"/></svg></button><button aria-label="旋转"><svg><use href="#rot"/></svg></button><button aria-label="平移"><svg><use href="#pan"/></svg></button><button aria-label="透视"><svg><use href="#persp"/></svg></button><i class="sep"></i>
    <button aria-label="着色"><svg><use href="#cube"/></svg></button><button class="dd" aria-label="着色选项"></button><button class="on" aria-label="面分析"><svg><use href="#ball"/></svg></button><button aria-label="线框"><svg><use href="#wire"/></svg></button><button aria-label="隐藏边"><svg><use href="#wireg"/></svg></button><button class="dd" aria-label="线框选项"></button><button aria-label="视图布局"><svg><use href="#note"/></svg></button><button class="dd" aria-label="布局选项"></button><button aria-label="背景"><svg><use href="#white"/></svg></button><button class="dd" aria-label="背景选项"></button><i class="sep"></i>
    <button aria-label="显示"><svg><use href="#boxp"/></svg></button><button aria-label="隐藏"><svg><use href="#boxq"/></svg></button><button aria-label="编辑截面"><svg><use href="#secr"/></svg></button><button aria-label="剪切截面"><svg><use href="#sec"/></svg></button><button class="more wide" aria-label="更多">»</button>
  </section>
  <section>
    <i class="grip"></i>
    <button class="on" aria-label="动态 WCS"><svg><use href="#wcs"/></svg></button><button aria-label="坐标系"><svg><use href="#axes"/></svg></button><button aria-label="对象显示"><svg><use href="#paint"/></svg></button><button aria-label="显示和隐藏"><svg><use href="#tri"/></svg></button><button aria-label="移动对象"><svg><use href="#move"/></svg></button><button aria-label="选择"><svg><use href="#pick"/></svg></button><button aria-label="移动图层"><svg><use href="#move"/></svg></button><i class="sep"></i>
    <button aria-label="测量距离"><svg><use href="#meas"/></svg></button><button aria-label="测量角度"><svg><use href="#ang"/></svg></button><button aria-label="曲率"><svg><use href="#curv"/></svg></button><button class="more" aria-label="更多"></button>
  </section>
  <section class="last">
    <i class="grip"></i>
    <button aria-label="直纹"><svg><use href="#surf"/></svg></button><button aria-label="通过曲线组"><svg><use href="#surf"/></svg></button><button aria-label="曲线网格"><svg><use href="#mesh"/></svg></button><button aria-label="扫掠"><svg><use href="#sweep"/></svg></button><button aria-label="N边曲面"><svg><use href="#surfo"/></svg></button><i class="sep"></i>
    <button aria-label="变换"><svg><use href="#xform"/></svg></button><button aria-label="偏置曲面"><svg><use href="#lay"/></svg></button><button aria-label="修剪片体"><svg><use href="#trim"/></svg></button><i class="sep"></i>
    <button aria-label="桥接曲面"><svg><use href="#bsur"/></svg></button><button aria-label="X型"><svg><use href="#xdim"/></svg></button><button aria-label="整体变形"><svg><use href="#boot"/></svg></button><button class="more end" aria-label="更多"></button>
  </section>
</div>

<div class="bar second" role="toolbar" aria-label="特征">
  <section>
    <i class="grip"></i>
    <button aria-label="草图"><svg><use href="#sketch"/></svg></button><i class="sep"></i>
    <button aria-label="拉伸"><svg><use href="#extr"/></svg></button><button aria-label="回转"><svg><use href="#revol"/></svg></button><button aria-label="蒙皮"><svg><use href="#skin"/></svg></button><button aria-label="管道"><svg><use href="#tube"/></svg></button><i class="sep"></i>
    <button aria-label="编辑特征"><svg><use href="#edit"/></svg></button><i class="sep"></i>
    <button aria-label="凸台"><svg><use href="#datum"/></svg></button><button class="more wide slim" aria-label="更多">»</button>
  </section>
  <section>
    <i class="grip"></i><button aria-label="样条"><svg><use href="#spine"/></svg></button><button class="more wide slim" aria-label="更多">»</button>
  </section>
  <section>
    <i class="grip"></i>
    <button aria-label="添加组件"><svg><use href="#addc"/></svg></button><button class="dd" aria-label="组件选项"></button><button aria-label="基准平面"><svg><use href="#plane"/></svg></button><button class="dd" aria-label="基准选项"></button><i class="sep"></i>
    <button aria-label="垫块"><svg><use href="#pad"/></svg></button><button aria-label="球"><svg><use href="#sph"/></svg></button><i class="sep"></i>
    <button aria-label="边倒圆"><svg><use href="#blend"/></svg></button><button aria-label="面倒圆"><svg><use href="#fold"/></svg></button><button aria-label="软倒圆"><svg><use href="#fold"/></svg></button><button aria-label="拔模"><svg><use href="#draft"/></svg></button><button aria-label="抽壳"><svg><use href="#bool"/></svg></button><button aria-label="拆分体"><svg><use href="#brick"/></svg></button><button aria-label="孔"><svg><use href="#hole"/></svg></button><button aria-label="偏置面"><svg><use href="#ring"/></svg></button><i class="sep"></i>
    <button aria-label="替换面"><svg><use href="#face"/></svg></button><button aria-label="偏置区域"><svg><use href="#off"/></svg></button><i class="sep"></i>
    <button aria-label="阵列"><svg><use href="#patt"/></svg></button><button class="more" aria-label="更多"></button>
  </section>
  <section>
    <i class="grip"></i>
    <button aria-label="直线"><svg><use href="#line"/></svg></button><button aria-label="圆弧"><svg><use href="#arc"/></svg></button><button aria-label="基本曲线"><svg><use href="#circ"/></svg></button><button aria-label="艺术样条"><svg><use href="#spl"/></svg></button><i class="sep"></i>
    <button aria-label="偏置曲线"><svg><use href="#offc"/></svg></button><button aria-label="桥接曲线"><svg><use href="#brg"/></svg></button><button aria-label="连结曲线"><svg><use href="#pts"/></svg></button><button class="dd" aria-label="曲线选项"></button><button aria-label="投影曲线"><svg><use href="#proj"/></svg></button><button aria-label="组合投影"><svg><use href="#proj"/></svg></button><button aria-label="相交曲线"><svg><use href="#projs"/></svg></button><button class="dd" aria-label="投影选项"></button><button class="more" aria-label="更多"></button>
  </section>
  <section class="last">
    <i class="grip"></i>
    <button aria-label="新建齿轮"><svg><use href="#g-new"/></svg></button><button aria-label="内齿轮"><svg><use href="#g-ring"/></svg></button><button aria-label="直齿轮"><svg><use href="#g-star"/></svg></button><button aria-label="斜齿轮"><svg><use href="#g-drum"/></svg></button><button aria-label="蜗轮"><svg><use href="#g-worm"/></svg></button><button aria-label="蜗杆"><svg><use href="#g-shaft"/></svg></button><button aria-label="锥齿轮"><svg><use href="#g-tor"/></svg></button><button aria-label="齿圈"><svg><use href="#g-blue"/></svg></button><button aria-label="齿廓"><svg><use href="#g-out"/></svg></button><button aria-label="行星轮"><svg><use href="#g-pl"/></svg></button><button aria-label="齿条"><svg><use href="#g-rack"/></svg></button><button aria-label="行星轮系"><svg><use href="#g-pl"/></svg></button><button aria-label="齿形"><svg><use href="#g-out"/></svg></button><button aria-label="圆柱齿轮"><svg><use href="#g-star"/></svg></button><button aria-label="弧齿轮"><svg><use href="#g-tor"/></svg></button><button aria-label="蜗轮副"><svg><use href="#g-worm"/></svg></button><button aria-label="准双曲面齿轮"><svg><use href="#g-tor"/></svg></button><button class="more end" aria-label="更多"></button>
  </section>
</div>

<div class="filter" role="toolbar" aria-label="选择">
  <span class="combo"><select aria-label="类型过滤器"><option>没有选择过滤器</option></select></span>
  <span class="combo scope"><select aria-label="选择范围"><option>整个装配</option></select></span>
  <button aria-label="仅在组件内"><svg><use href="#snapg"/></svg></button><i class="sep"></i>
  <button aria-label="过滤器"><svg><use href="#snapf"/></svg></button><button class="dd" aria-label="过滤器选项"></button><button aria-label="返回"><svg><use href="#back"/></svg></button><button aria-label="选择面"><svg><use href="#snap"/></svg></button><button aria-label="旋转点"><svg><use href="#turn"/></svg></button><button aria-label="链"><svg><use href="#pipe"/></svg></button><i class="sep"></i>
  <button aria-label="矩形选择"><svg><use href="#rect"/></svg></button><button class="dd" aria-label="选择方式"></button><i class="sep"></i>
  <button aria-label="高亮"><svg><use href="#cubr"/></svg></button>
  <button class="more end" aria-label="更多"></button>
</div>

<div class="cue"><p>选择对象并使用 MB3，或者双击某一对象</p><p class="state"></p><p class="c1"></p><p class="c2"></p><button aria-label="全屏"><svg><use href="#full"/></svg></button></div>

<div class="split"><div class="slider"><button aria-label="向左"><svg viewBox="0 0 16 16"><path d="M12 4L5 8l7 4" fill="none" stroke="#666" stroke-width="2"/></svg></button><span></span><button aria-label="向右"><svg viewBox="0 0 16 16"><path d="M4 4l7 4-7 4" fill="none" stroke="#666" stroke-width="2"/></svg></button></div></div>

<main>
  <aside>
    <button aria-label="装配导航器"><svg><use href="#r-asm"/></svg></button>
    <button aria-label="约束导航器"><svg><use href="#r-con"/></svg></button>
    <button class="brk" aria-label="部件导航器"><svg><use href="#r-tool"/></svg></button>
    <button class="brk" aria-label="HD3D 工具"><svg><use href="#r-info"/></svg></button>
    <button class="brk" aria-label="浏览器"><svg><use href="#r-web"/></svg></button>
    <button aria-label="历史记录"><svg><use href="#r-clk"/></svg></button>
    <button aria-label="系统材料"><svg><use href="#r-pal"/></svg></button>
    <button aria-label="可视化"><svg><use href="#r-rain"/></svg></button>
    <button aria-label="向导"><svg><use href="#r-wand"/></svg></button>
    <button aria-label="角色"><svg><use href="#r-usr"/></svg></button>
    <button aria-label="系统场景"><svg><use href="#r-pic"/></svg></button>
  </aside>
  <div class="view">
    <svg viewBox="36 172 1328 565" role="img" aria-label="行星齿轮装配">
      <defs>
        <linearGradient id="shade" x1="0" y1=".65" x2="1" y2=".35"><stop offset="0" stop-color="#166816"/><stop offset=".2" stop-color="#166816"/><stop offset=".38" stop-color="#22a022"/><stop offset=".5" stop-color="#29c829"/><stop offset=".62" stop-color="#2cd42c"/><stop offset=".75" stop-color="#3aff3a"/></linearGradient>
        <linearGradient id="sunshade"><stop offset="0" stop-color="#f00"/><stop offset=".3" stop-color="#c00"/><stop offset=".65" stop-color="#900"/><stop offset="1" stop-color="#600000"/></linearGradient>
      </defs>
      <g id="gears"></g>
      <g class="wcs"><path d="M700 413v53h50"/><text x="701" y="408">YC</text><text x="701" y="465">ZC</text><text x="758" y="466">XC</text></g>
      <g class="triad"><circle cx="114" cy="657" r="5"/><path class="ty" d="M114 616v37"/><path class="tx" d="M119 657h36"/><text class="ly" x="110" y="611">Y</text><text class="lx" x="163" y="662">X</text><text class="lz" x="110" y="662">Z</text></g>
    </svg>
  </div>
</main>

<footer>
  <div class="apps">
    <button aria-label="开始菜单"><svg><use href="#t-start"/></svg></button><button aria-label="ANSYS"><svg><use href="#t-ans"/></svg></button><button aria-label="计算器"><svg><use href="#t-calc"/></svg></button><button aria-label="浏览器"><svg><use href="#t-e"/></svg></button><button aria-label="QQ"><svg><use href="#t-qq"/></svg></button><button aria-label="画图"><svg><use href="#t-paint"/></svg></button><button aria-label="输入法"><svg><use href="#t-by"/></svg></button><button class="run act" aria-label="NX"><svg><use href="#nx"/></svg></button><button class="run" aria-label="资源管理器"><svg><use href="#t-dir"/></svg></button><button class="run" aria-label="程序"><svg><use href="#t-win"/></svg></button>
  </div>
  <div class="tray">
    <button class="up" aria-label="显示隐藏的图标"></button><svg><use href="#y-grid"/></svg><svg><use href="#y-nv"/></svg><svg><use href="#y-sig"/></svg><svg><use href="#y-plus"/></svg><svg><use href="#y-flag"/></svg><svg><use href="#y-vol"/></svg><span class="ime">英</span><b>M</b><time>8:30</time>
  </div>
</footer>
<script src="gears.js"></script>
</body>
</html>
```
FILE: styles.css
```css
* { box-sizing: border-box; }
body { margin: 0; height: 100vh; display: flex; flex-direction: column; overflow: hidden; background: #d6d6d6; font: 12px/16px "Noto Sans", "Noto Sans CJK SC", sans-serif; color: #000; }
button { border: 0; padding: 0; margin: 0; background: none; font: inherit; color: inherit; display: flex; align-items: center; justify-content: center; flex: none; }
p, h1 { margin: 0; }
.defs { position: absolute; width: 0; height: 0; }
.ic, button svg { width: 16px; height: 16px; flex: none; }

.title { flex: none; height: 23px; display: flex; align-items: center; padding-left: 3px; border-top: 1px solid #111; background: linear-gradient(#8a8a90, #55555a 7px, #1c1c1c 8px, #1a1a1a); }
.title h1 { margin-left: 5px; font-size: 16px; line-height: 22px; font-weight: 400; color: #626262; white-space: pre; }
.brand { margin-left: auto; font: 800 15px/22px "Open Sans", "Noto Sans", sans-serif; color: #fff; }
.winbtns { display: flex; gap: 3px; margin-left: 28px; padding-right: 2px; align-self: flex-start; }
.winbtns button { width: 20px; height: 20px; background: linear-gradient(#777, #333 50%, #222); border-radius: 0 0 2px 2px; }

.menu { flex: none; height: 27px; display: flex; align-items: center; padding: 0 4px; background: linear-gradient(#e8e8e8, #dadada); border-bottom: 1px solid #b4b4b4; }
.menu > button { margin-left: 12px; white-space: nowrap; }
.menu > .latin { font-size: 13px; }
.menu > .ic + button { margin-left: 6px; }
.docbtns { display: flex; gap: 2px; margin-left: auto; }
.docbtns button { width: 17px; height: 17px; border: 1px solid #888; border-radius: 4px; background: #f2f2f2; }
.grip { flex: none; width: 3px; height: 19px; background: repeating-linear-gradient(#999 0 2px, transparent 2px 4px); }

.bar { flex: none; height: 27px; display: flex; background: linear-gradient(#e2e2e2, #cfcfcf); border-bottom: 1px solid #b0b0b0; }
.bar.second { background: linear-gradient(#dcdcdc, #c8c8c8); border-bottom-color: #9c9c9c; }
.bar section { flex: none; display: flex; align-items: center; padding-left: 4px; border-right: 1px solid #b0b0b0; box-shadow: inset 1px 0 #eee; }
.bar .last { flex: 1; border-right: 0; }
.bar button, .filter button { width: 23px; height: 23px; }
.bar .go { width: 59px; gap: 4px; }
.sep { flex: none; width: 2px; height: 23px; margin: 0 2px; border-left: 1px solid #aaa; border-right: 1px solid #eee; }
.tri, .dd::after, .more::after, .combo::after { content: ""; border: 3px solid transparent; border-top: 4px solid #000; border-bottom: 0; }
.bar .dd { width: 12px; }
.filter .dd { width: 10px; }
.bar .more, .filter .more { width: 13px; flex-direction: column; justify-content: flex-end; padding-bottom: 6px; line-height: 12px; font-size: 15px; }
.bar .more.wide { width: 25px; padding-left: 10px; gap: 2px; padding-bottom: 5px; }
.bar .more.slim { width: 19px; padding-left: 0; }
.bar .end, .filter .end { margin-left: auto; margin-right: 3px; }
.bar .on { background: #fff; border: 1px solid #666; border-radius: 3px; }

.filter { flex: none; height: 30px; display: flex; align-items: center; padding-left: 5px; background: linear-gradient(#c8c8c8, #dcdcdc); border-bottom: 1px solid #bbb; }
.combo { position: relative; width: 143px; height: 19px; margin-right: 8px; }
.combo.scope { width: 151px; margin-right: 4px; }
.combo select { appearance: none; width: 100%; height: 19px; padding: 0 20px 0 1px; border: 1px solid #555; border-radius: 3px; font: inherit; line-height: 17px; color: #000; background: linear-gradient(#e8f4ff, #68b0f0) right / 17px 100% no-repeat, #fff; }
.combo::after { position: absolute; right: 4px; top: 7px; border-width: 6px 5px 0; }

.cue { flex: none; height: 22px; display: flex; align-items: center; padding-left: 3px; background: #d9d9d9; border-bottom: 1px solid #999; font-weight: 700; font-size: 13px; }
.cue p:first-child { flex: 1; }
.cue .state, .cue .c1, .cue .c2 { height: 21px; border-left: 1px solid #aaa; box-shadow: inset 1px 0 #eee; }
.cue .state { flex: 1; }
.cue .c1 { width: 19px; }
.cue .c2 { width: 37px; }
.cue button { width: 22px; height: 21px; border-left: 1px solid #aaa; }

.split { position: relative; flex: none; height: 16px; background: linear-gradient(#bcbcbc 4px, #999 5px, #e8e8e8 6px, #d8d8d8 9px, #ececec 10px, #c8c8c8 14px, #888); z-index: 1; }
.slider { position: absolute; left: 85px; top: 0; display: flex; border: 1px solid #777; }
.slider button { width: 21px; height: 21px; background: linear-gradient(#f4f4f4, #ccc); border: 1px solid #fff; }
.slider span { width: 74px; background: linear-gradient(#555, #333 5px, #1a1a1a 8px); }

main { flex: 1; min-height: 0; display: flex; }
aside { flex: none; width: 28px; padding: 15px 0 0 6px; display: flex; flex-direction: column; gap: 2px; background: linear-gradient(90deg, #a6a6a6, #b2b2b2); }
aside button { width: 22px; height: 32px; background: linear-gradient(#f0f0f0, #d4d4d4); border: 1px solid #666; border-right: 0; border-radius: 4px 0 0 4px; box-shadow: inset 1px 1px #fff; }
aside .brk { margin-bottom: 12px; }
.view { flex: 1; min-width: 0; border-left: 1px solid #707070; box-shadow: -7px 0 #ebebeb; margin-left: 7px; border-bottom: 1px solid #fff; border-right: 2px solid #ddd; background: linear-gradient(#b4b5b7, #c2c3c5 20%, #e6e7e9 78%); }
.view svg { display: block; width: 100%; height: 100%; }
#gears path, #gears circle { stroke: #303030; shape-rendering: crispEdges; }
.green { fill: #38ff38; }
.disc { fill: url(#shade); }
.red { fill: #f00; }
.sun { fill: url(#sunshade); }
.thin { fill: none; }
.wcs path { fill: none; stroke: #e8e8e8; stroke-width: 2; shape-rendering: crispEdges; }
.wcs text { fill: #c8c8c8; font-size: 12px; }
.triad circle { fill: #aaa; }
.triad path { stroke-width: 2; }
.triad text { font-size: 11px; }
.ty { stroke: #00c880; }
.tx { stroke: #ff2828; }
.ly { fill: #00c880; }
.lx { fill: #ff2828; }
.lz { fill: #2828ff; }

footer { flex: none; height: 30px; display: flex; justify-content: space-between; color: #fff; background: linear-gradient(115deg, #958572 0 35px, transparent 36px), linear-gradient(155deg, transparent 180px, #5e463066 200px, transparent 245px), linear-gradient(90deg, #7c5b3e, #8a6848 25%, #806045 45%, #7b604a 65%, #705743); border-top: 1px solid #5c4734; }
.apps { display: flex; }
.apps button { width: 46px; height: 29px; }
.apps button:first-child { width: 49px; padding-right: 5px; }
.apps .run { width: 42px; margin: 0 2px; background: #ffffff28; border: 1px solid #b8a898; }
.apps .act { background: #ffffff70; border-color: #fff; }
.tray { display: flex; align-items: center; }
.tray svg { width: 16px; height: 16px; margin-left: 8px; }
.up { width: 16px; }
.up::after { content: ""; border: 4px solid transparent; border-bottom: 5px solid #fff; border-top: 0; }
.ime { margin-left: 12px; font-size: 15px; }
.tray b { margin-left: 13px; width: 15px; height: 15px; line-height: 15px; font-size: 13px; text-align: center; color: #111; background: #fff; }
.tray time { margin: 0 41px 0 35px; }
```
FILE: gears.js
```js
const NS = "http://www.w3.org/2000/svg";
const root = document.getElementById("gears");

// Closed outline of a spur gear. gb and gt are the half angles, in degrees,
// of each gap at its floor and at the tip circle; phase is a gap's centre.
// bow sets how far the flanks bulge: 0.5 and above gives nearly straight ones.
function gear(cx, cy, n, phase, rr, rt, gb, gt, bow = 0.35, fillet = 2) {
  const p = (r, a) => {
    const t = a * Math.PI / 180;
    return (cx + r * Math.cos(t)).toFixed(1) + " " + (cy + r * Math.sin(t)).toFixed(1);
  };
  const mid = rr + (rt - rr) * 0.6;
  const bend = gb + (gt - gb) * bow;
  let d = "";
  for (let k = 0; k < n; k++) {
    const a = phase + k * 360 / n;
    d += (k ? "L" : "M") + p(rt, a - gt);
    d += "Q" + p(mid, a - bend) + " " + p(rr + fillet, a - gb);
    d += "Q" + p(rr - fillet, a) + " " + p(rr + fillet, a + gb);
    d += "Q" + p(mid, a + bend) + " " + p(rt, a + gt);
  }
  return d + "Z";
}

function add(tag, cls, attrs) {
  const el = document.createElementNS(NS, tag);
  el.setAttribute("class", cls);
  for (const k in attrs) el.setAttribute(k, attrs[k]);
  root.append(el);
}

const cx = 700, cy = 466;
add("circle", "sun", { cx, cy, r: 59 });

const planets = [
  [700, 299, 178.7, 77.1],
  [557, 548, -82.9, 8.9],
  [843, 548, -87.7, 171.1],
];
for (const [x, y, wheel, pinion] of planets) {
  add("circle", "disc", { cx: x, cy: y, r: 120 });
  add("path", "green", { d: gear(x, y, 28, wheel, 102, 119, 2, 4.4) });
  add("path", "thin", { d: gear(x, y, 14, pinion, 51, 70, 4, 12) });
}

add("path", "red", { d: gear(cx, cy, 12, 108, 44, 59, 5, 11) });
add("path", "red", {
  d: `M438 466a262 263 0 1 0 524 0a262 263 0 1 0-524 0Z` + gear(cx, cy, 54, -86.667, 219, 238, 0.9, 2.8, 0.65, 1),
  "fill-rule": "evenodd",
});
```
